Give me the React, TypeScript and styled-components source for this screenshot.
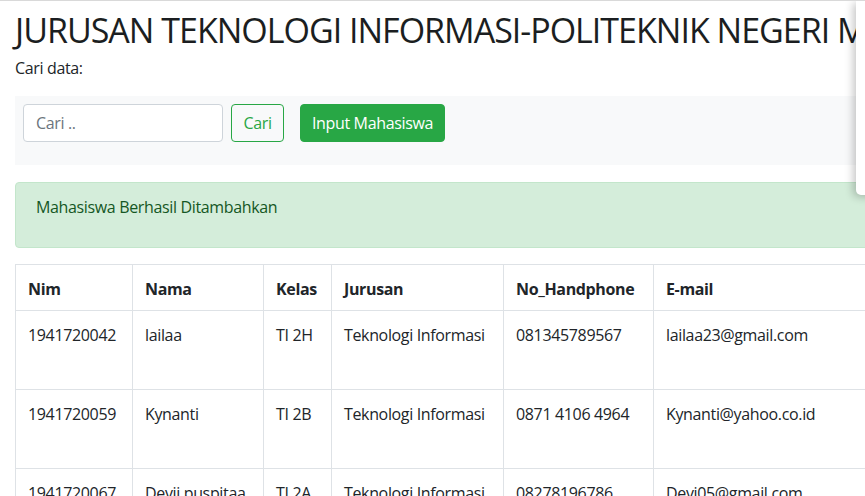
import React from "react";
import styled, { createGlobalStyle } from "styled-components";

type Mahasiswa = {
  nim: string;
  nama: string;
  kelas: string;
  jurusan: string;
  hp: string;
  email: string;
};

const data: Mahasiswa[] = [
  {
    nim: "1941720042",
    nama: "lailaa",
    kelas: "TI 2H",
    jurusan: "Teknologi Informasi",
    hp: "081345789567",
    email: "lailaa23@gmail.com",
  },
  {
    nim: "1941720059",
    nama: "Kynanti",
    kelas: "TI 2B",
    jurusan: "Teknologi Informasi",
    hp: "0871 4106 4964",
    email: "Kynanti@yahoo.co.id",
  },
  {
    nim: "1941720067",
    nama: "Devii puspitaa",
    kelas: "TI 2A",
    jurusan: "Teknologi Informasi",
    hp: "08278196786",
    email: "Devi05@gmail.com",
  },
];

const columns = [
  { label: "Nim", width: 117 },
  { label: "Nama", width: 131 },
  { label: "Kelas", width: 68 },
  { label: "Jurusan", width: 172 },
  { label: "No_Handphone", width: 150 },
  { label: "E-mail", width: 260 },
  { label: "Aksi", width: 240 },
];

const App: React.FC = () => {
  return (
    <>
      <GlobalStyle />
      <Page>
        <Container>
          <Title>JURUSAN TEKNOLOGI INFORMASI-POLITEKNIK NEGERI MALANG</Title>
          <Label>Cari data:</Label>
          <SearchBar>
            <SearchInput placeholder="Cari .." />
            <OutlineButton>Cari</OutlineButton>
            <SuccessButton>Input Mahasiswa</SuccessButton>
          </SearchBar>
          <Alert>Mahasiswa Berhasil Ditambahkan</Alert>
          <Table>
            <thead>
              <HeadRow>
                {columns.map((c) => (
                  <Th key={c.label} $width={c.width}>
                    {c.label}
                  </Th>
                ))}
              </HeadRow>
            </thead>
            <tbody>
              {data.map((m) => (
                <BodyRow key={m.nim}>
                  <Td>{m.nim}</Td>
                  <Td>{m.nama}</Td>
                  <Td>{m.kelas}</Td>
                  <Td>{m.jurusan}</Td>
                  <Td>{m.hp}</Td>
                  <Td>{m.email}</Td>
                  <Td />
                </BodyRow>
              ))}
            </tbody>
          </Table>
        </Container>
        <Popup />
      </Page>
    </>
  );
};

export default App;

// Styled Components

const GlobalStyle = createGlobalStyle`
  html, body {
    margin: 0;
    padding: 0;
    background: #fff;
    overflow: hidden;
  }
  body {
    font-family: "Open Sans", "Liberation Sans", sans-serif;
    font-size: 16px;
    line-height: 24px;
    letter-spacing: -0.35px;
    color: #212529;
  }
  * {
    box-sizing: border-box;
  }
`;

const Page = styled.div`
  position: relative;
  width: 100vw;
  height: 100vh;
  overflow: hidden;
  border-top: 1px solid #d9d9d9;
`;

const Container = styled.div`
  width: 1180px;
  padding: 0 15px;
`;

const Title = styled.h1`
  margin: 8px 0 0;
  font-size: 34px;
  line-height: 42px;
  font-weight: 500;
  letter-spacing: -1px;
  white-space: nowrap;
  color: #1b1e21;
`;

const Label = styled.p`
  margin: 5px 0 0;
`;

const SearchBar = styled.div`
  display: flex;
  align-items: center;
  margin-top: 16px;
  padding: 8px 8px 23px;
  background: #f8f9fa;
`;

const SearchInput = styled.input`
  width: 200px;
  height: 38px;
  padding: 6px 12px;
  border: 1px solid #ced4da;
  border-radius: 4px;
  font: inherit;
  letter-spacing: inherit;
  color: #495057;
  background: #fff;
  outline: none;

  &::placeholder {
    color: #6c757d;
  }
`;

const BaseButton = styled.button`
  height: 38px;
  padding: 0;
  border-radius: 4px;
  font: inherit;
  letter-spacing: inherit;
  text-align: center;
  cursor: pointer;
`;

const OutlineButton = styled(BaseButton)`
  width: 53px;
  margin-left: 8px;
  border: 1px solid #28a745;
  background: transparent;
  color: #28a745;
`;

const SuccessButton = styled(BaseButton)`
  width: 145px;
  margin-left: 16px;
  border: 1px solid #28a745;
  background: #28a745;
  color: #fff;
`;

const Alert = styled.div`
  margin-top: 17px;
  padding: 12px 20px 28px;
  border: 1px solid #c3e6cb;
  border-radius: 4px;
  background: #d4edda;
  color: #155724;
`;

const Table = styled.table`
  margin-top: 16px;
  border-collapse: collapse;
  table-layout: fixed;
  width: 1138px;
  border: 1px solid #dee2e6;
`;

const HeadRow = styled.tr`
  height: 46px;
`;

const BodyRow = styled.tr`
  height: 79px;
`;

const Th = styled.th<{ $width: number }>`
  width: ${(p) => p.$width}px;
  padding: 12px 12px 9px;
  border: 1px solid #dee2e6;
  text-align: left;
  vertical-align: bottom;
  font-weight: 700;
`;

const Td = styled.td`
  padding: 12px;
  border: 1px solid #dee2e6;
  vertical-align: top;
  white-space: nowrap;
`;

const Popup = styled.div`
  position: absolute;
  top: 0;
  left: 856px;
  width: 320px;
  height: 194px;
  background: #fff;
  border-radius: 0 0 0 5px;
  box-shadow: -3px 2px 8px rgba(0, 0, 0, 0.22);
`;
